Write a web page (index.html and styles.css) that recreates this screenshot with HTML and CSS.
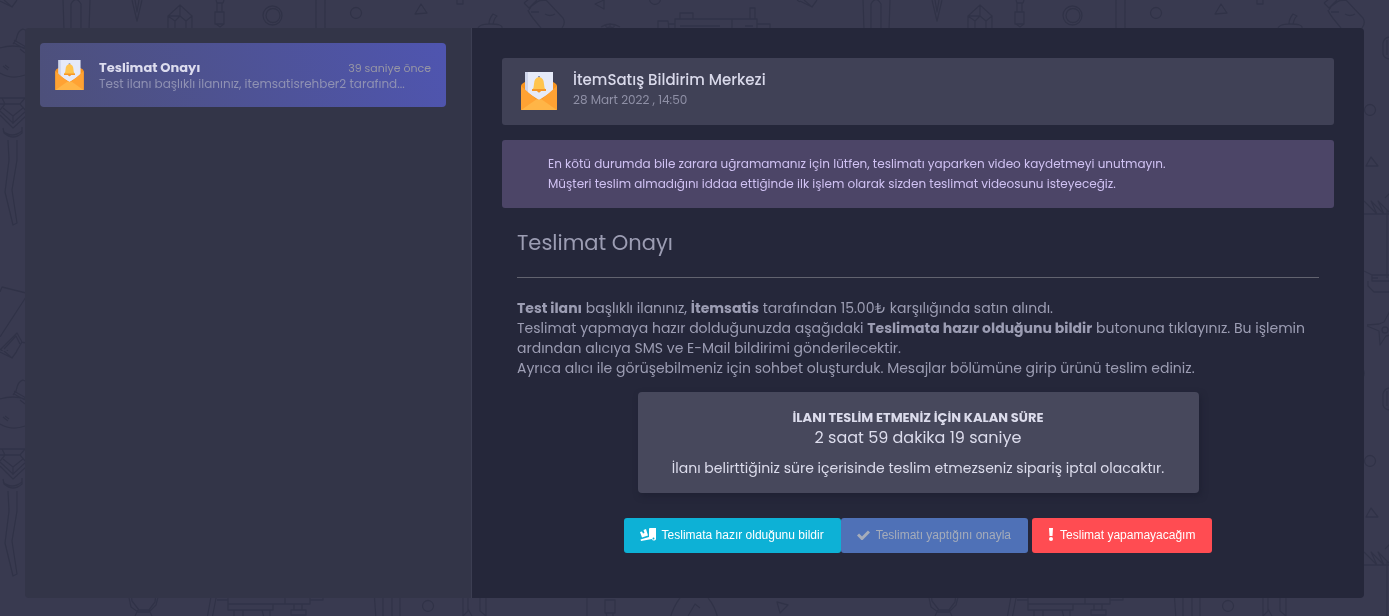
FILE: index.html
```html
<!DOCTYPE html>
<html lang="tr">
<head>
<meta charset="utf-8">
<meta name="viewport" content="width=device-width, initial-scale=1">
<title>Teslimat Onayı</title>
<link rel="stylesheet" href="styles.css">
</head>
<body>
<svg class="backdrop" aria-hidden="true">
  <defs>
    <pattern id="doodles" width="800" height="351" patternUnits="userSpaceOnUse">
      <g fill="none" stroke="#303247" stroke-width="1.3" stroke-linejoin="round">
        <path d="M0 1l12 6 5-7M4 0l8 7M797 0l3 2M63 0l1 30M71 30V4q5-9 10 0v26M90 0l-1 30M132 0l5 21 5-21M135 0l2 12 2-12"/>
        <path d="M168 30V16l12-11 12 11v14M180 5v11l-12 0M168 16l7 5 5-5 6 5 6-5M175 21v9M186 21v9"/>
        <path d="M216 0l1 3h6l1-3M217 3v9M222 3v9M215 12h9v12h-9zM216 24l4 3 4-3M316 0v30M325 0v30"/>
        <circle cx="272.500" cy="15.500" r="9.500"/><circle cx="273" cy="15.500" r="7"/><circle cx="356" cy="13" r="5.500"/>
        <path d="M421 4l6 9-12 1zM457 0v4h6V0M478 30q-1-6 12-6t12 4M489 24q0-5 4-10l4 2q-3 2-4 9"/>
        <path d="M524 3l5 5 11-8M524 3l5-4M529 8l8-8M528 10q1 4 13 18M529 10q4-10 17-10l17 18q3 5-1 10M531 12h8M545 14q5 3 10 0M595 4l9-4v9zM601 27q9-6 19 0M604 30q6-6 12 0M606 24v3M610 23v4M614 24v3"/>
        <circle cx="655" cy="-1" r="5.500"/>
        <path d="M658 30v-9h10l1 9M668 24h7M675 30V19h82v11M680 19v-6h13v6M732 19v11M750 19V8h5v11M757 24h13v6M680 26h40M745 26h8"/>
        <path d="M0 48q13-4 25 0M0 73q12 7 25 2M13 44l3-4q2-10 7-11l6 3M14 40l12 7M14 43l11 6M3 66l5 4M5 65l4 3M20 49l5 4"/>
        <path d="M0 98h27M0 104l13 0M2 98l3 6-5 6M5 104h15l5-6M20 104l6 7M0 111l13 12 13-12M0 115l13 13 13-12M13 116v8M3 108l10 8 10-8M3 128l1 5q9 8 18 0v-6M3 131q9 8 19 0M8 140l1 20-4 32 8 33 4-2-5-33 5-30V140"/>
        <path d="M0 292l2-5 24 6M26 297L0 337M0 350l17-17 5 9-10 17-12-10M4 349l12-13 4 8M7 350l5 8M21 342l5 1"/>
        <path d="M589 37q-5 1-6 6v11q1 4 6 5M587 40v15"/><circle cx="570" cy="110" r="5.500"/>
        <path d="M571 157l7 9h-12zM585 198l6-6M564 201l13 13-6-13 13 13-6-13 12 12M560 214h30M587 210v68M564 271l8 4v6h18M572 275h18M568 281v5l6 6h16M572 278h6M567 325l12-1 5-2 6-11M567 326l12 5 1 14 6-9 5-1"/><circle cx="585" cy="330" r="3"/>
        <path d="M128 242l3 14 7 5h11l7-7 3-12M131 242l1 8 7 9h10l6-8 1-9M138 259l-3 6M149 259l3 6M212 240l-5 28M217 242l-5 26M217 249h11M228 240v13h82v-13M285 240v13M310 249h13v-7M228 253v6h45v-6M294 253v6M302 253v6M291 259h15v5h-15zM234 259v8M243 259v8M262 259l2 8M270 259v8"/>
        <path d="M374 240l2 28M383 240v28M392 240v28M400 240v28M463 240v28M468 240v20l-5 5M480 240v20l6 5V240M468 258l4 7"/><circle cx="428" cy="255" r="5.500"/>
        <path d="M606 240v7M613 240v7M605 249h10v13h-10zM606 262l1 4M613 262v4M680 247q-7 9-10 21M688 265l7-12 5 4M708 247q7 8 10 21M777 251l11 3-8 8z"/>
      </g>
    </pattern>
    <symbol id="mail" viewBox="0 0 36 38">
      <path fill="#f7931e" d="M0 14q0-2 4-4h28q4 2 4 4v24H0z"/>
      <path fill="#e6eaf8" d="M4 0h28v19L18 28 4 19z"/>
      <path fill="#cfd5ea" d="M4 0h3v21l-3-3z"/>
      <path fill="#ffa233" d="M0 14l16 14L0 38zM36 14L20 28l16 10z"/>
      <path fill="#ffb547" d="M0 38l16-11 2 1 2-1 16 11z"/>
      <path fill="#8d94b3" d="M17 4h2v4h-2z"/>
      <path fill="#ffc44d" d="M18 5q5 1 5 7 0 4 2 6H11q2-2 2-6 0-6 5-7z"/>
      <path fill="#f79828" d="M11 17h14v2H11zM16 19h4q-2 3-4 0z"/>
    </symbol>
  </defs>
  <rect width="100%" height="100%" fill="url(#doodles)"/>
</svg>

<div class="page">
  <div class="panel">
    <aside class="sidebar">
      <a class="notice" href="#detay">
        <svg class="notice-icon" aria-hidden="true"><use href="#mail"/></svg>
        <span class="notice-body">
          <span class="notice-top">
            <strong class="notice-title">Teslimat Onayı</strong>
            <time class="notice-time">39 saniye önce</time>
          </span>
          <span class="notice-text">Test ilanı başlıklı ilanınız, itemsatisrehber2 tarafınd...</span>
        </span>
      </a>
    </aside>

    <main class="detail" id="detay">
      <header class="sender">
        <svg class="sender-icon" aria-hidden="true"><use href="#mail"/></svg>
        <div>
          <h1 class="sender-name">İtemSatış Bildirim Merkezi</h1>
          <time class="sender-date">28 Mart 2022 , 14:50</time>
        </div>
      </header>

      <p class="warning">En kötü durumda bile zarara uğramamanız için lütfen, teslimatı yaparken video kaydetmeyi unutmayın.<br>Müşteri teslim almadığını iddaa ettiğinde ilk işlem olarak sizden teslimat videosunu isteyeceğiz.</p>

      <article class="message">
        <h2 class="message-title">Teslimat Onayı</h2>
        <p class="message-text"><b>Test ilanı</b> başlıklı ilanınız, <b>İtemsatis</b> tarafından 15.00₺ karşılığında satın alındı.<br>Teslimat yapmaya hazır dolduğunuzda aşağıdaki <b>Teslimata hazır olduğunu bildir</b> butonuna tıklayınız. Bu işlemin ardından alıcıya SMS ve E-Mail bildirimi gönderilecektir.<br>Ayrıca alıcı ile görüşebilmeniz için sohbet oluşturduk. Mesajlar bölümüne girip ürünü teslim ediniz.</p>

        <section class="countdown">
          <h3 class="countdown-title">İLANI TESLİM ETMENİZ İÇİN KALAN SÜRE</h3>
          <p class="countdown-value">2 saat 59 dakika 19 saniye</p>
          <p class="countdown-note">İlanı belirttiğiniz süre içerisinde teslim etmezseniz sipariş iptal olacaktır.</p>
        </section>

        <div class="actions">
          <button class="btn btn-ready" type="button">
            <svg class="icon-truck" viewBox="0 0 16 13" aria-hidden="true"><path fill="currentColor" d="M0 4l2-.5 1 2 1.500-.5-1-3 2.500-1 2 6.500-6 2zM9 1q0-1 1-1h6v10a2 2 0 0 1-4 1L1 13l-.5-1.500L9 9z"/><circle cx="13.500" cy="10.500" r="1" fill="#0db1d6"/></svg>
            Teslimata hazır olduğunu bildir
          </button>
          <button class="btn btn-confirm" type="button" disabled>
            <svg class="icon-check" viewBox="0 0 13 10" aria-hidden="true"><path fill="none" stroke="currentColor" stroke-width="3" d="M1 4.500l4 4L12 1.500"/></svg>
            Teslimatı yaptığını onayla
          </button>
          <button class="btn btn-reject" type="button">
            <svg class="icon-alert" viewBox="0 0 6 13" aria-hidden="true"><path fill="currentColor" d="M1 0h4l-.5 8h-3z"/><circle cx="3" cy="11" r="2" fill="currentColor"/></svg>
            Teslimat yapamayacağım
          </button>
        </div>
      </article>
    </main>
  </div>
</div>
</body>
</html>
```
FILE: styles.css
```css
* {
  box-sizing: border-box;
  margin: 0;
}

body {
  background: #393a50;
  color: #9c9db3;
  font-family: Poppins, Inter, sans-serif;
  font-size: 14px;
  line-height: 20px;
}

.backdrop {
  position: fixed;
  inset: 0;
  z-index: -1;
  width: 100%;
  height: 100%;
}

.page {
  display: flex;
  min-height: 100vh;
  padding: 28px 25px 18px;
}

.panel {
  display: grid;
  grid-template-columns: 447px 1fr;
  flex: 1;
  border-radius: 4px;
  overflow: hidden;
}

.sidebar {
  padding: 15px 25px 15px 15px;
  background: #333548;
  border-right: 1px solid #3c3e52;
}

.notice {
  display: flex;
  align-items: center;
  gap: 15px;
  height: 64px;
  padding: 0 15px;
  border-radius: 4px;
  background: linear-gradient(70deg, #4d507a, #4f55b0);
  color: #8f91b3;
  text-decoration: none;
}

.notice-icon {
  flex: none;
  width: 29px;
  height: 30px;
}

.notice-body {
  display: flex;
  flex: 1;
  flex-direction: column;
  min-width: 0;
  padding-top: 2px;
  line-height: 16px;
}

.notice-top {
  display: flex;
  justify-content: space-between;
}

.notice-title {
  color: #dcdcee;
  font-size: 13px;
}

.notice-time {
  color: #9796a5;
  font-size: 11px;
}

.notice-text {
  font-size: 12px;
  white-space: nowrap;
  overflow: hidden;
  text-overflow: ellipsis;
}

.detail {
  padding: 30px;
  background: #25273a;
}

.sender {
  display: flex;
  align-items: flex-start;
  gap: 16px;
  padding: 14px 19px 15px;
  border-radius: 3px;
  background: #404156;
}

.sender-icon {
  width: 36px;
  height: 38px;
}

.sender-name {
  margin-top: -2px;
  color: #d9d9ea;
  font-size: 15px;
  font-weight: 500;
  line-height: 20px;
}

.sender-date {
  display: block;
  color: #8f90a6;
  font-size: 12px;
}

.warning {
  margin-top: 15px;
  padding: 14px 46px;
  border-radius: 3px;
  background: #4c4567;
  color: #d0c2f3;
  font-size: 12px;
}

.message {
  padding: 20px 15px 0;
}

.message-title {
  padding-bottom: 19px;
  border-bottom: 1px solid #62636f;
  font-size: 21px;
  font-weight: 400;
  line-height: 30px;
}

.message-text {
  margin-top: 20px;
}

.message-text b {
  font-weight: 700;
}

.countdown {
  max-width: 561px;
  margin: 14px auto 0;
  padding: 16px 15px 15px;
  border-radius: 4px;
  background: #47485c;
  box-shadow: 2px 3px 6px #1f2133;
  color: #dcdcec;
  text-align: center;
}

.countdown-title {
  font-size: 13px;
  font-weight: 700;
  line-height: 20px;
}

.countdown-value {
  font-size: 16px;
}

.countdown-note {
  margin-top: 10px;
}

.actions {
  display: flex;
  justify-content: center;
  margin-top: 25px;
}

.btn {
  display: flex;
  align-items: center;
  gap: 6px;
  height: 35px;
  padding: 0 17px 2px 16px;
  border: 0;
  border-radius: 3px;
  color: #fff;
  font-family: "Liberation Sans", Arial, sans-serif;
  font-size: 12px;
  font-weight: 500;
}

.btn-ready {
  background: #0db1d6;
}

.btn-confirm {
  background: #4f71b7;
  color: #a5acba;
}

.btn-reject {
  margin-left: 4px;
  background: #ff4c52;
}

.icon-truck {
  width: 16px;
  height: 13px;
}

.icon-check {
  width: 13px;
  height: 10px;
}

.icon-alert {
  width: 6px;
  height: 13px;
}
```
